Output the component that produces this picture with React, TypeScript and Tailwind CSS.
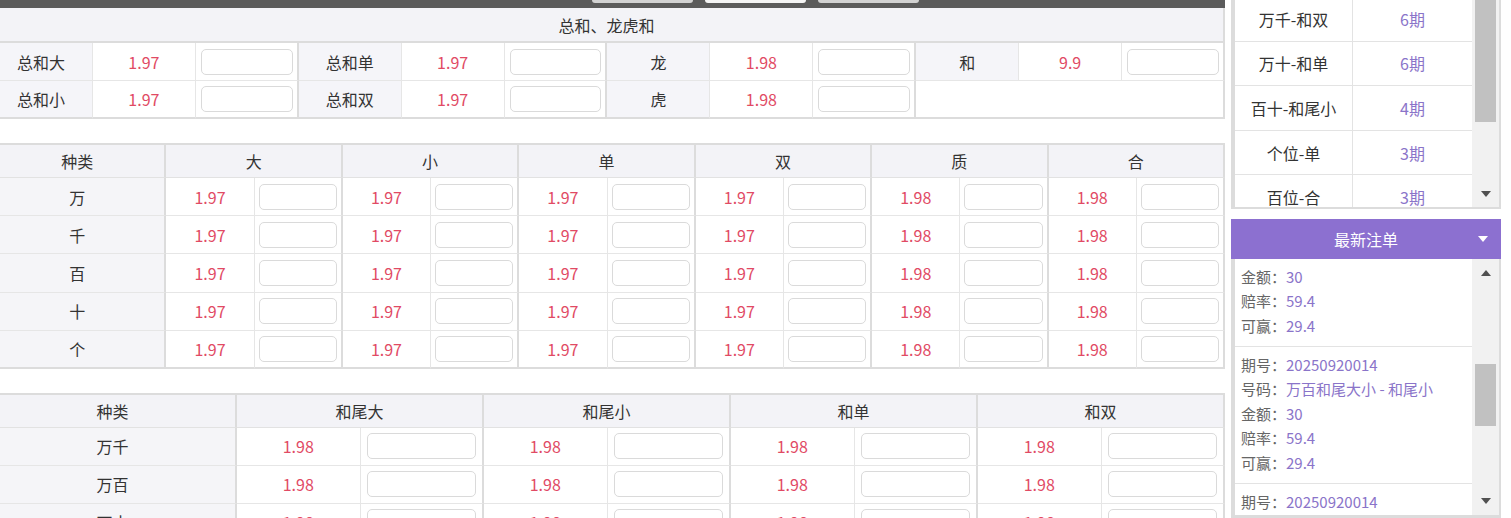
import React from "react";

const FONT = "font-['Microsoft_YaHei','Noto_Sans_CJK_SC',sans-serif]";
const RED = "text-[#e14a64]";
const PURPLE = "text-[#8a74c9]";

function Inp() {
  return (
    <input
      readOnly
      className="h-[26px] w-full rounded-[5px] border border-[#dadada] bg-white outline-none"
    />
  );
}

const s1: ([string, string] | null)[][] = [
  [["总和大", "1.97"], ["总和单", "1.97"], ["龙", "1.98"], ["和", "9.9"]],
  [["总和小", "1.97"], ["总和双", "1.97"], ["虎", "1.98"], null],
];

const s2Head = ["大", "小", "单", "双", "质", "合"];
const s2Odds = ["1.97", "1.97", "1.97", "1.97", "1.98", "1.98"];
const s2Rows = ["万", "千", "百", "十", "个"];

const s3Head = ["和尾大", "和尾小", "和单", "和双"];
const s3Rows = ["万千", "万百", "万十", "万个"];

const dragon = [
  ["万千-和双", "6期"],
  ["万十-和单", "6期"],
  ["百十-和尾小", "4期"],
  ["个位-单", "3期"],
  ["百位-合", "3期"],
];

function Tri({ up = false, color = "#505050" }: { up?: boolean; color?: string }) {
  return (
    <svg width="10" height="6" viewBox="0 0 10 6">
      {up ? <path d="M0 6 L5 0 L10 6 Z" fill={color} /> : <path d="M0 0 L10 0 L5 6 Z" fill={color} />}
    </svg>
  );
}

function Line({ k, v }: { k: string; v: string }) {
  return (
    <div className="whitespace-nowrap">
      <span className="text-[#666]">{k}：</span>
      <span className="text-[#8a74c9]">{v}</span>
    </div>
  );
}

function FullOrder() {
  return (
    <div className="border-b border-[#e3e3e3] px-[6px] pb-[7.5px] pt-[6px] leading-[24.5px]">
      <Line k="期号" v="20250920014" />
      <Line k="号码" v="万百和尾大小 - 和尾小" />
      <Line k="金额" v="30" />
      <Line k="赔率" v="59.4" />
      <Line k="可赢" v="29.4" />
    </div>
  );
}

export default function App() {
  return (
    <div className={`flex h-[518px] w-[1511px] overflow-hidden bg-white text-[16px] text-[#333] ${FONT}`}>
      {/* Left column */}
      <div className="-ml-[10px] w-[1235px] shrink-0">
        {/* dark bar */}
        <div className="flex h-[8px] gap-[12px] bg-[#5b5b5b] pl-[602px]">
          <div className="h-[3px] w-[101px] rounded-b-[4px] bg-[#d2d2d2]" />
          <div className="h-[3px] w-[101px] rounded-b-[4px] bg-[#f4f4f4]" />
          <div className="h-[3px] w-[101px] rounded-b-[4px] bg-[#d2d2d2]" />
        </div>

        {/* Section 1 */}
        <div className="flex h-[35px] items-center justify-center border-b-2 border-r-2 border-[#dcdcdc] bg-[#f3f3f7]">
          总和、龙虎和
        </div>
        {s1.map((row, ri) => {
          const last = ri === s1.length - 1;
          const bb = last ? "border-b-2 border-b-[#dcdcdc]" : "border-b border-b-[#e6e6e6]";
          return (
            <div key={ri} className="grid grid-cols-12">
              {row.map((g, gi) =>
                g ? (
                  <React.Fragment key={gi}>
                    <div className={`flex h-[38px] items-center justify-center border-r border-[#e6e6e6] bg-[#f5f5f9] ${bb}`}>
                      {g[0]}
                    </div>
                    <div className={`flex h-[38px] items-center justify-center border-r border-[#e6e6e6] bg-white ${RED} ${bb}`}>
                      {g[1]}
                    </div>
                    <div className={`flex h-[38px] items-center border-r-2 border-[#dcdcdc] bg-white pl-[5px] pr-[4px] ${bb}`}>
                      <Inp />
                    </div>
                  </React.Fragment>
                ) : (
                  <div key={gi} className={`col-span-3 h-[38px] border-r-2 border-[#dcdcdc] bg-white ${bb}`} />
                )
              )}
            </div>
          );
        })}

        {/* Section 2 */}
        <div className="mt-[24px]">
          <div className="grid grid-cols-14">
            <div className="col-span-2 flex h-[35px] items-center justify-center border-b border-r-2 border-t-2 border-[#dcdcdc] border-b-[#e2e2e2] bg-[#f3f3f7]">
              种类
            </div>
            {s2Head.map((h) => (
              <div
                key={h}
                className="col-span-2 flex h-[35px] items-center justify-center border-b border-r-2 border-t-2 border-[#dcdcdc] border-b-[#e2e2e2] bg-[#f3f3f7]"
              >
                {h}
              </div>
            ))}
          </div>
          {s2Rows.map((r, ri) => {
            const last = ri === s2Rows.length - 1;
            const bb = last ? "border-b-2 border-b-[#dcdcdc]" : "border-b border-b-[#e6e6e6]";
            return (
              <div key={r} className="grid grid-cols-14">
                <div className={`col-span-2 flex h-[38.2px] items-center justify-center border-r-2 border-[#dcdcdc] bg-[#f5f5f8] ${bb}`}>
                  {r}
                </div>
                {s2Odds.map((o, i) => (
                  <React.Fragment key={i}>
                    <div className={`flex h-[38.2px] items-center justify-center border-r border-[#e6e6e6] bg-white ${RED} ${bb}`}>
                      {o}
                    </div>
                    <div className={`flex h-[38.2px] items-center border-r-2 border-[#dcdcdc] bg-white pl-[4px] pr-[4px] ${bb}`}>
                      <Inp />
                    </div>
                  </React.Fragment>
                ))}
              </div>
            );
          })}
        </div>

        {/* Section 3 */}
        <div className="mt-[24px]">
          <div className="grid grid-cols-10">
            <div className="col-span-2 flex h-[35px] items-center justify-center border-b border-r-2 border-t-2 border-[#dcdcdc] border-b-[#e2e2e2] bg-[#f3f3f7]">
              种类
            </div>
            {s3Head.map((h) => (
              <div
                key={h}
                className="col-span-2 flex h-[35px] items-center justify-center border-b border-r-2 border-t-2 border-[#dcdcdc] border-b-[#e2e2e2] bg-[#f3f3f7]"
              >
                {h}
              </div>
            ))}
          </div>
          {s3Rows.map((r) => (
            <div key={r} className="grid grid-cols-10">
              <div className="col-span-2 flex h-[38px] items-center justify-center border-b border-r-2 border-[#dcdcdc] border-b-[#e6e6e6] bg-[#f5f5f8]">
                {r}
              </div>
              {s3Head.map((h) => (
                <React.Fragment key={h}>
                  <div className={`flex h-[38px] items-center justify-center border-b border-r border-[#e6e6e6] bg-white ${RED}`}>
                    1.98
                  </div>
                  <div className="flex h-[38px] items-center border-b border-r-2 border-[#dcdcdc] border-b-[#e6e6e6] bg-white pl-[6px] pr-[6px]">
                    <Inp />
                  </div>
                </React.Fragment>
              ))}
            </div>
          ))}
        </div>
      </div>

      {/* Right column */}
      <div className="ml-[6px] flex w-[270px] shrink-0 flex-col">
        {/* Long dragon list */}
        <div className="flex h-[209px] border-b-2 border-l-4 border-r-2 border-[#dcdcdc] bg-white">
          <div className="w-[237px] overflow-hidden">
            <div className="-mt-[3px]">
              {dragon.map(([a, b]) => (
                <div key={a} className="flex h-[44.6px] border-b border-[#e3e3e3]">
                  <div className="flex w-[118px] items-center justify-center border-r border-[#e3e3e3]">{a}</div>
                  <div className={`flex flex-1 items-center justify-center ${PURPLE}`}>{b}</div>
                </div>
              ))}
            </div>
          </div>
          <div className="flex w-[27px] flex-col bg-[#f1f1f1]">
            <div className="ml-[3px] h-[122px] w-[21px] bg-[#c1c1c1]" />
            <div className="flex-1" />
            <div className="flex h-[26px] items-center justify-center">
              <Tri />
            </div>
          </div>
        </div>

        {/* Purple bar */}
        <div className="relative mt-[10px] flex h-[40px] items-center justify-center bg-[#8c70d0] text-white">
          最新注单
          <div className="absolute right-[13px] top-[17px] flex">
            <Tri color="#ffffff" />
          </div>
        </div>

        {/* Orders */}
        <div className="flex h-[259px] border-b-[3px] border-l-4 border-r-2 border-[#dcdcdc] bg-white">
          <div className="w-[237px] overflow-hidden text-[15px]">
            <div className="border-b border-[#e3e3e3] px-[6px] pb-[7.5px] pt-[5.5px] leading-[24.5px]">
              <Line k="金额" v="30" />
              <Line k="赔率" v="59.4" />
              <Line k="可赢" v="29.4" />
            </div>
            <FullOrder />
            <FullOrder />
          </div>
          <div className="flex w-[27px] flex-col bg-[#f1f1f1]">
            <div className="flex h-[28px] items-center justify-center">
              <Tri up />
            </div>
            <div className="ml-[3px] mt-[77px] h-[62px] w-[21px] bg-[#c1c1c1]" />
            <div className="flex-1" />
            <div className="flex h-[28px] items-center justify-center">
              <Tri />
            </div>
          </div>
        </div>
      </div>
    </div>
  );
}
